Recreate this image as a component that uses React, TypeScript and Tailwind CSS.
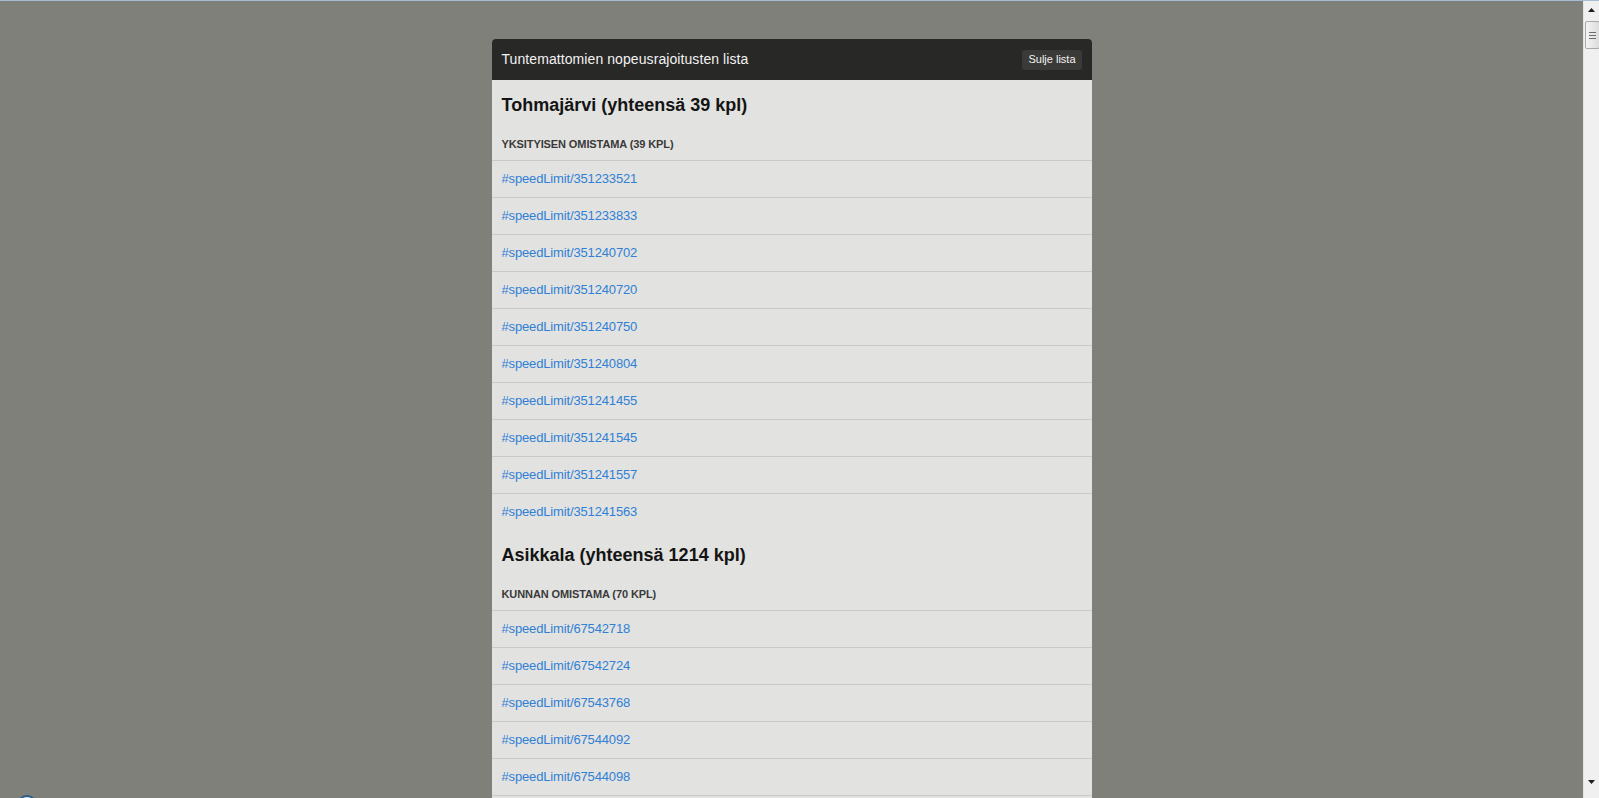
import React from 'react';

interface Section {
  name: string;
  total: number;
  groups: { label: string; count: number; ids: string[] }[];
}

const sections: Section[] = [
  {
    name: 'Tohmajärvi',
    total: 39,
    groups: [
      {
        label: 'Yksityisen omistama',
        count: 39,
        ids: [
          '351233521',
          '351233833',
          '351240702',
          '351240720',
          '351240750',
          '351240804',
          '351241455',
          '351241545',
          '351241557',
          '351241563',
        ],
      },
    ],
  },
  {
    name: 'Asikkala',
    total: 1214,
    groups: [
      {
        label: 'Kunnan omistama',
        count: 70,
        // only the rows that fit in the viewport
        ids: ['67542718', '67542724', '67543768', '67544092', '67544098'],
      },
    ],
  },
];

function ArrowIcon({ down = false }: { down?: boolean }) {
  return (
    <svg width="7" height="4" viewBox="0 0 7 4" className={down ? 'rotate-180' : ''}>
      <path d="M3.5 0 L7 4 L0 4 Z" fill="#1e1e1e" />
    </svg>
  );
}

function Scrollbar() {
  return (
    <div className="w-[16px] bg-[#f0f0f0] border-l border-[#e3e3e3] flex flex-col items-center">
      <div className="h-[18px] w-full flex items-center justify-center">
        <ArrowIcon />
      </div>
      <div className="mt-[2px] h-[28px] w-[15px] ml-px rounded-[2px] border border-[#a9a9a9] bg-gradient-to-r from-[#f4f4f4] to-[#dcdcdc] flex flex-col items-center justify-center gap-[2px]">
        <span className="block h-px w-[7px] bg-[#6e6e6e]" />
        <span className="block h-px w-[7px] bg-[#6e6e6e]" />
        <span className="block h-px w-[7px] bg-[#6e6e6e]" />
      </div>
      <div className="flex-1" />
      <div className="h-[18px] mb-[7px] w-full flex items-center justify-center">
        <ArrowIcon down />
      </div>
    </div>
  );
}

export default function App() {
  return (
    <div className="h-[798px] overflow-hidden flex flex-col font-['Liberation_Sans',Arial,sans-serif]">
      <div className="h-px bg-[#a7bcd4]" />
      <div className="flex flex-1 min-h-0">
        <main className="flex-1 bg-[#80807a] pt-[38px] overflow-hidden">
          <div className="w-[600px] mx-auto">
            <div className="h-[41px] bg-[#282826] rounded-t-[4px] flex items-center justify-between px-[10px]">
              <span className="text-[14px] tracking-[0.08px] text-[#f2f2f2]">
                Tuntemattomien nopeusrajoitusten lista
              </span>
              <button className="h-[20px] px-[6px] rounded-[3px] bg-[#3a3a38] text-[11px] text-[#f2f2f2]">
                Sulje lista
              </button>
            </div>
            <div className="bg-[#e2e2e0]">
              {sections.map((section) => (
                <div key={section.name}>
                  <h2 className="pt-[15px] px-[10px] text-[18px] leading-[20px] font-bold text-[#141414]">
                    {section.name} (yhteensä {section.total} kpl)
                  </h2>
                  {section.groups.map((group) => (
                    <div key={group.label} className="last:border-b-0">
                      <h3 className="pt-[22px] pb-[9px] px-[10px] text-[11px] leading-[14px] font-bold uppercase tracking-[-0.1px] text-[#3a3a3a]">
                        {group.label} ({group.count} kpl)
                      </h3>
                      {group.ids.map((id) => (
                        <div
                          key={id}
                          className="h-[37px] border-t border-[#c9c9c7] flex items-center px-[10px]"
                        >
                          <a
                            href={`#speedLimit/${id}`}
                            className="text-[13px] tracking-[-0.15px] text-[#2f80d6]"
                          >
                            #speedLimit/{id}
                          </a>
                        </div>
                      ))}
                    </div>
                  ))}
                </div>
              ))}
              <div className="h-[20px] border-t border-[#c9c9c7]" />
            </div>
          </div>
        </main>
        <Scrollbar />
      </div>
      <div className="fixed left-[17px] top-[795px] w-[20px] h-[20px] rounded-full border-2 border-[#2d5b87] bg-[#dbe7f3]" />
    </div>
  );
}
